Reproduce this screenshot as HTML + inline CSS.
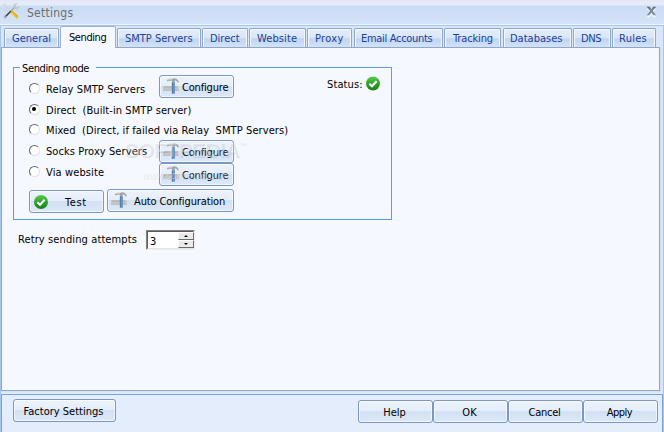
<!DOCTYPE html>
<html><head><meta charset="utf-8">
<style>
*{box-sizing:border-box;margin:0;padding:0}
html,body{width:664px;height:432px;overflow:hidden}
body{position:relative;background:#dbe7f8;font-family:"DejaVu Sans Condensed","Liberation Sans",sans-serif;font-size:11px;color:#000}
.abs{position:absolute}
#title{left:0;top:0;width:664px;height:25px;background:linear-gradient(#e3e6f5 0,#e3e6f5 1.2px,#e6ecf8 1.8px,#e4ebf7 5px,#d8e4f6 5px,#d8e4f6 6px,#c9dcf4 6px,#d4e3f7 23.5px,#f0f5fc 24px,#f0f5fc 25px)}
#title .t{left:27px;top:6px;font-size:12px;letter-spacing:.25px;color:#6e6e6e;}
#frame{left:0;top:25px;width:664px;height:408px;background:#d9e6f8;border:1px solid #a5c6ee}
.tab{position:absolute;top:28px;height:19px;border:1px solid #8fa7c8;border-bottom:none;border-radius:2px 2px 0 0;background:linear-gradient(#e4edfa 0,#d9e6f7 50%,#c0d5f0 54%,#d3e2f6 100%);color:#1b419a;text-align:left;padding-left:6px;line-height:19px;white-space:nowrap;box-shadow:inset 1px 1px 0 #f2f7fd,inset -1px 0 0 #f2f7fd}
.tab.act{border-color:#9fb4d2;top:26px;height:22px;background:#f5f8fe;color:#000;line-height:21px;padding-left:8px;box-shadow:none;z-index:3}
#panel{left:1px;top:47px;width:659px;height:344px;background:#f5f8fe;border:1px solid #8fa7c8;z-index:2}
#bottom{left:1px;top:394px;width:662px;height:38px;background:#e3edfb;border:1px solid #77a2da;border-bottom:none}
#gap{left:1px;top:391px;width:662px;height:3px;background:linear-gradient(#d3dff1,#e6eefa);z-index:1}
#rsh{left:660px;top:48px;width:1px;height:343px;background:#d3dff1;z-index:1}
.btn{position:absolute;height:23px;border:1px solid #7c98be;border-radius:3px;background:linear-gradient(#edf3fc 0,#e4edf9 47%,#d2e1f4 50%,#dce8f8 100%);text-align:center;line-height:23px;padding-right:2px;color:#000;box-shadow:inset 0 0 0 1px rgba(255,255,255,.6);z-index:5;white-space:nowrap}
.lbl{position:absolute;white-space:pre;z-index:5;line-height:13px}
.radio{position:absolute;width:11px;height:11px;border-radius:50%;border:1.5px solid;border-color:#666 #e2e2e2 #e2e2e2 #666;background:#fff;z-index:5;transform:rotate(0deg)}
.radio.on::after{content:"";position:absolute;left:2px;top:2px;width:4px;height:4px;border-radius:50%;background:#000}
#grp{left:13px;top:67px;width:379px;height:153px;border:1px solid #5a9bf2;z-index:4}
#leg{left:20px;top:62px;background:#f5f8fe;padding:0 7px 0 2px;z-index:5;line-height:13px}
.ic{position:absolute;left:3px;top:2px}
#t_cfg2,#t_cfg3{letter-spacing:-0.18px}/*LS*/#t_sending{letter-spacing:-0.420px}#t_website{letter-spacing:0.113px}#t_proxy{letter-spacing:0.338px}#t_email{letter-spacing:-0.305px}#t_tracking{letter-spacing:-0.129px}#t_dns{letter-spacing:-0.338px}#t_rules{letter-spacing:0.281px}#t_leg{letter-spacing:-0.368px}#t_relay{letter-spacing:0.080px}#t_dir{letter-spacing:0.078px}#t_mixed{letter-spacing:0.087px}#t_socks{letter-spacing:0.085px}#t_via{letter-spacing:0.126px}#t_cfg1{letter-spacing:-0.180px}#t_test{letter-spacing:0.570px}#t_auto{letter-spacing:-0.111px}#t_status{letter-spacing:0.113px}#t_retry{letter-spacing:0.111px}#t_cancel{letter-spacing:-0.270px}#t_apply{letter-spacing:-0.506px}/*END*/
</style></head><body>
<svg width="0" height="0" style="position:absolute"><defs>
<linearGradient id="gg" x1="0" y1="0" x2="0" y2="1"><stop offset="0" stop-color="#5ccb52"/><stop offset=".5" stop-color="#2fa32c"/><stop offset="1" stop-color="#17801a"/></linearGradient>
<g id="ham"><rect x="0" y="8" width="15.7" height="4.600" fill="#c8c8c8"/><rect x="0" y="11.800" width="15.700" height=".8" fill="#b4b4b4"/><path d="M2 8.300v1.800M4 8.300v1.800M6 8.300v1.800M8 8.300v1.800M13 8.300v2.200" stroke="#a6a6a6" stroke-width=".9"/><path d="M3.800 2.600C4.500 1 7 .6 9 .9 10 .1 11.500 0 12.500 .5c2 .5 3.200 2 3.400 3.800l-1.300.1C14 3.200 13 2.600 11.800 2.600L11.600 4.400H9L9 2.800C7.500 2.600 5.500 3 4.300 3.600z" fill="#a4a4a4"/><path d="M4.800 2.300C6 1.500 7.500 1.400 8.800 1.600" stroke="#dedede" stroke-width=".8" fill="none"/><rect x="8.900" y="4.300" width="2.700" height="11.400" fill="#4a9bf0"/><rect x="8.900" y="4.300" width=".8" height="11.400" fill="#5d6f86"/><rect x="11" y="4.300" width=".6" height="11.400" fill="#5b86b8"/></g>
<g id="chk"><circle cx="7" cy="7" r="7" fill="url(#gg)"/><path d="M3.400 7.200l2.600 2.600 4.600-5" stroke="#fff" stroke-width="2.100" fill="none"/></g>
</defs></svg>
<div id="title" class="abs"><div class="t abs" id="t_title">Settings</div>
<svg class="abs" style="left:645px;top:5px" width="14" height="13" viewBox="0 0 14 13"><defs><linearGradient id="xg" x1="0" y1="0" x2="0" y2="1"><stop offset="0" stop-color="#50555c"/><stop offset=".25" stop-color="#76859a"/><stop offset="1" stop-color="#8497ae"/></linearGradient></defs><path id="xp" d="M1.700 2.700h2.800l1.900 2.600 1.900-2.600h2.800l-3.300 4.300 3.300 4.300h-2.800l-1.900-2.600-1.900 2.600h-2.800l3.300-4.300z" fill="#f4f8fd" transform="translate(0 1)"/><path d="M1.700 1.700h2.800l1.900 2.600 1.900-2.600h2.800l-3.300 4.300 3.300 4.300h-2.800l-1.900-2.600-1.900 2.600h-2.800l3.300-4.300z" fill="url(#xg)"/></svg>
<svg class="abs" style="left:3px;top:3px" width="16" height="16" viewBox="0 0 16 16"><path d="M1 1.300 L7.500 7.800" stroke="#d4d7dc" stroke-width="1.700" stroke-linecap="round"/><path d="M8.800 8.800 L14 14" stroke="#f4be0a" stroke-width="2.600" stroke-linecap="round"/><path d="M9.600 8.200 L14.700 13.300" stroke="#e09a06" stroke-width=".8"/><path d="M12.500 3.500 L7.500 8.500" stroke="#a9adb3" stroke-width="1.700"/><path d="M7.500 8.500 L2.800 13.200" stroke="#3c3c3c" stroke-width="1.500" stroke-linecap="round"/><circle cx="2.200" cy="14" r="1.200" fill="none" stroke="#a3a6ab" stroke-width="1"/><path d="M10.300 2.700c.4-2 2.500-2.900 4.200-2.200l-2 2 .5 1.500 1.500.5 1.500-2c.6 1.700-.1 3.700-2.100 4.100-1.700.3-3.800-1.400-3.600-3.900z" fill="#c3c6ca"/></svg>
</div>
<div id="frame" class="abs"></div>
<div id="panel" class="abs"></div>
<div class="tab" style="left:4px;width:55px;padding-left:7px"><span id="t_general">General</span></div>
<div class="tab act" style="left:60px;width:56px"><span id="t_sending">Sending</span></div>
<div class="tab" style="left:117px;width:84px;padding-left:7px"><span id="t_smtp">SMTP Servers</span></div>
<div class="tab" style="left:202px;width:46px;padding-left:7px"><span id="t_direct">Direct</span></div>
<div class="tab" style="left:249px;width:57px;padding-left:7px"><span id="t_website">Website</span></div>
<div class="tab" style="left:307px;width:45px;padding-left:7px"><span id="t_proxy">Proxy</span></div>
<div class="tab" style="left:354px;width:89px;padding-left:6px"><span id="t_email">Email Accounts</span></div>
<div class="tab" style="left:444px;width:57px;padding-left:8px"><span id="t_tracking">Tracking</span></div>
<div class="tab" style="left:503px;width:69px;padding-left:6px"><span id="t_db">Databases</span></div>
<div class="tab" style="left:573px;width:38px;padding-left:7px"><span id="t_dns">DNS</span></div>
<div class="tab" style="left:612px;width:44px;padding-left:6px"><span id="t_rules">Rules</span></div>

<div id="grp" class="abs"></div>
<div id="leg" class="abs"><span id="t_leg">Sending mode</span></div>

<div class="radio" style="left:29px;top:83px"></div><div class="lbl" id="t_relay" style="left:46px;top:83px">Relay SMTP Servers</div>
<div class="radio on" style="left:29px;top:104px"></div><div class="lbl" id="t_dir" style="left:46px;top:104px">Direct  (Built-in SMTP server)</div>
<div class="radio" style="left:29px;top:124px"></div><div class="lbl" id="t_mixed" style="left:46px;top:124px">Mixed  (Direct, if failed via Relay  SMTP Servers)</div>
<div class="radio" style="left:29px;top:145px"></div><div class="lbl" id="t_socks" style="left:46px;top:145px">Socks Proxy Servers</div>
<div class="radio" style="left:29px;top:166px"></div><div class="lbl" id="t_via" style="left:46px;top:166px">Via website</div>

<div class="btn" style="left:159px;top:75px;width:75px"><svg class="ic" width="16" height="16"><use href="#ham"/></svg><span class="abs" id="t_cfg1" style="left:22px">Configure</span></div>
<div class="btn" style="left:159px;top:140px;width:75px"><svg class="ic" width="16" height="16"><use href="#ham"/></svg><span class="abs" id="t_cfg2" style="left:22px">Configure</span></div>
<div class="btn" style="left:159px;top:163px;width:75px"><svg class="ic" width="16" height="16"><use href="#ham"/></svg><span class="abs" id="t_cfg3" style="left:22px">Configure</span></div>
<div class="btn" style="left:29px;top:190px;width:75px"><svg class="abs" style="left:4px;top:4px" width="14" height="14"><use href="#chk"/></svg><span class="abs" id="t_test" style="left:35px">Test</span></div>
<div class="btn" style="left:107px;top:189px;width:127px"><svg class="ic" width="16" height="16"><use href="#ham"/></svg><span class="abs" id="t_auto" style="left:26px">Auto Configuration</span></div>

<div class="lbl" id="t_status" style="left:327px;top:78px">Status:</div>
<svg class="abs" style="left:366px;top:76px;z-index:5" width="14" height="15"><use href="#chk" y=".5"/></svg>
<div class="lbl" id="t_retry" style="left:18px;top:233px">Retry sending attempts</div>

<div class="abs" id="spin" style="left:146px;top:230px;width:49px;height:20px;background:#fff;border:1px solid;border-color:#828282 #f0f0f0 #f0f0f0 #828282;z-index:5">
 <div class="abs" style="left:0;top:0;width:47px;height:18px;border:1px solid;border-color:#5a5a5a #e3e3e3 #e3e3e3 #5a5a5a"></div>
 <div class="lbl" id="t_three" style="left:3px;top:4px">3</div>
 <div class="abs" style="left:31px;top:1px;width:16px;height:8px;background:#e9e9e9;border:1px solid;border-color:#fafafa #6b6b6b #6b6b6b #fafafa"><div class="abs" style="left:4.5px;top:2px;border:2px solid transparent;border-top:0;border-bottom:2px solid #000"></div></div>
 <div class="abs" style="left:31px;top:9px;width:16px;height:8px;background:#e9e9e9;border:1px solid;border-color:#fafafa #6b6b6b #6b6b6b #fafafa"><div class="abs" style="left:4.5px;top:2px;border:2px solid transparent;border-bottom:0;border-top:2px solid #000"></div></div>
</div>

<div class="abs" id="wm1" style="left:124px;top:133px;z-index:9;font:bold 21px/24px 'Liberation Sans',sans-serif;color:rgba(255,255,255,.32);text-shadow:1px 1px 0 rgba(110,120,140,.2);letter-spacing:-.6px;white-space:nowrap">SOFTPEDIA<span style="font-size:7px;vertical-align:10px;letter-spacing:0;font-weight:normal">&#8482;</span></div>
<div class="abs" id="wm2" style="left:142px;top:170px;z-index:9;font:italic 10px/12px 'Liberation Sans',sans-serif;color:rgba(255,255,255,.4);text-shadow:1px 1px 0 rgba(110,120,140,.16);white-space:nowrap">www.softpedia.com</div>
<div id="gap" class="abs"></div><div id="rsh" class="abs"></div>
<div id="bottom" class="abs"></div>
<div class="btn" style="left:13px;top:399px;width:103px"><span id="t_factory">Factory Settings</span></div>
<div class="btn" style="left:358px;top:400px;width:75px"><span id="t_help">Help</span></div>
<div class="btn" style="left:433px;top:400px;width:75px"><span id="t_ok">OK</span></div>
<div class="btn" style="left:508px;top:400px;width:75px"><span id="t_cancel">Cancel</span></div>
<div class="btn" style="left:583px;top:400px;width:75px"><span id="t_apply">Apply</span></div>
</body></html>
